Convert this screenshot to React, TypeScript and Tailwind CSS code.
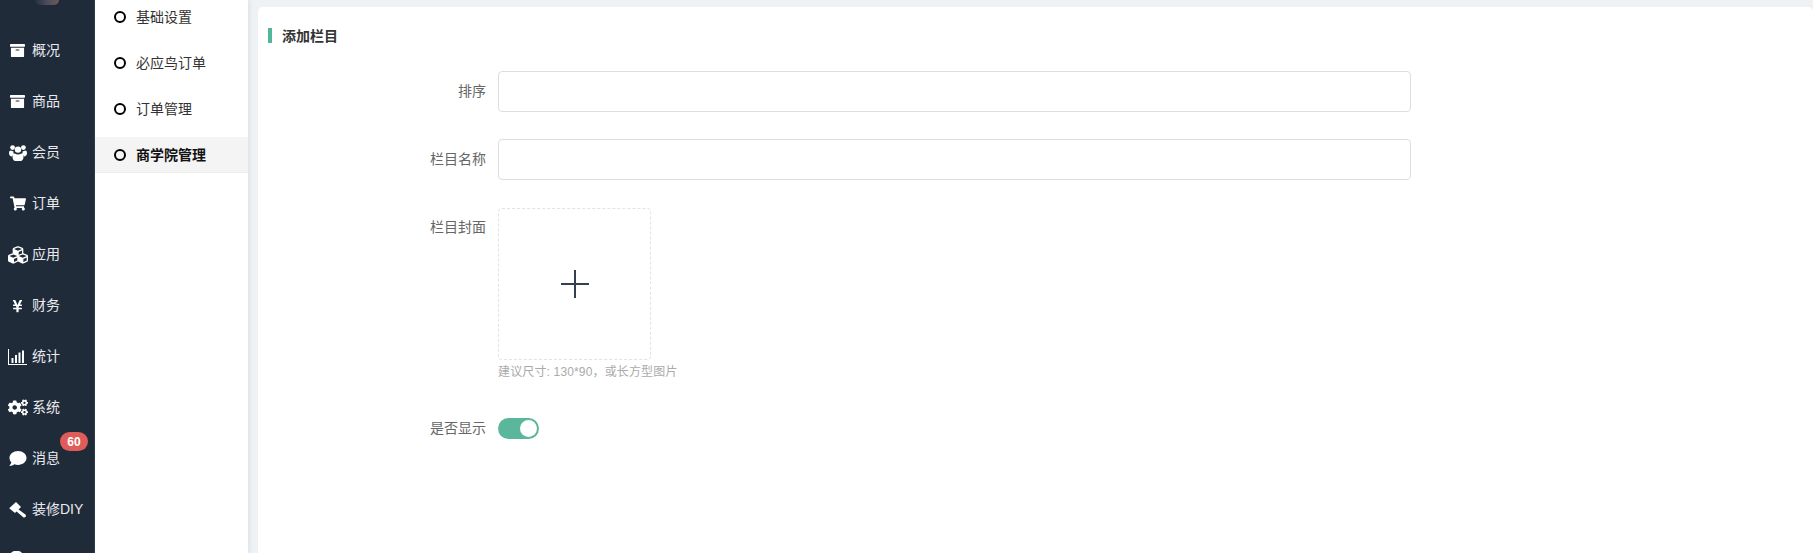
import React from "react";
import { FaArchive, FaShoppingCart, FaCubes, FaYenSign, FaCogs, FaComment } from "react-icons/fa";

const BarChart = ({ className }: { className?: string }) => (
  <svg viewBox="0 0 19 16" className={className} fill="currentColor">
    <path d="M0 0h1v15h18v1H0z" />
    <path d="M3.5 9h2v5h-2zM7 6h2v8H7zM10.5 3.500h2V14h-2zM14 1.500h2V14h-2z" />
  </svg>
);

const Users = ({ className }: { className?: string }) => (
  <svg viewBox="0 0 18 16" className={className} fill="currentColor">
    <circle cx="3.600" cy="2.600" r="2.400" />
    <circle cx="14.400" cy="2.600" r="2.400" />
    <circle cx="9" cy="4.600" r="3.200" />
    <path d="M0 8c0-1.600.9-2.400 1.900-2.400.7.500 1.500.8 2.500.7-.2 1.200.2 2.300 1 3.100-1.200.3-2 1-2.400 2.100C1.200 11.500 0 10.300 0 8zM18 8c0-1.600-.9-2.400-1.900-2.400-.7.500-1.500.8-2.500.7.200 1.200-.2 2.300-1 3.100 1.200.3 2 1 2.400 2.100 1.800-.1 3-1.200 3-3.500z" />
    <path d="M5.800 8.500c.8.700 1.900 1.100 3.200 1.100s2.400-.4 3.200-1.100c1.500.1 2.300 1.400 2.300 3.300 0 2.700-1.200 4.200-2.900 4.200H6.400c-1.700 0-2.900-1.500-2.900-4.200 0-1.900.8-3.200 2.300-3.300z" />
  </svg>
);

const Gavel = ({ className }: { className?: string }) => (
  <svg viewBox="0 0 17 16" className={className} fill="currentColor">
    <path d="M7 0 12 5 6 11 .2 6.200z" />
    <path d="M8.600 6.800 16.400 12.600c.7.600.7 1.800 0 2.500s-1.800.6-2.400-.1L7 9z" />
  </svg>
);

const items: { label: string; icon: React.ReactNode; badge?: string }[] = [
  { label: "概况", icon: <FaArchive className="w-[15px] h-[15px]" /> },
  { label: "商品", icon: <FaArchive className="w-[15px] h-[15px]" /> },
  { label: "会员", icon: <Users className="w-[18px] h-[16px]" /> },
  { label: "订单", icon: <FaShoppingCart className="w-[16px] h-[15px]" /> },
  { label: "应用", icon: <FaCubes className="w-[20px] h-[20px]" /> },
  { label: "财务", icon: <FaYenSign className="w-[11px] h-[14px]" /> },
  { label: "统计", icon: <BarChart className="w-[19px] h-[16px]" /> },
  { label: "系统", icon: <FaCogs className="w-[20px] h-[17px]" /> },
  { label: "消息", icon: <FaComment className="w-[18px] h-[17px]" />, badge: "60" },
  { label: "装修DIY", icon: <Gavel className="w-[17px] h-[16px]" /> },
];

const subItems = ["基础设置", "必应鸟订单", "订单管理", "商学院管理"];
const font = "font-['Liberation_Sans','Noto_Sans_CJK_SC',sans-serif]";

function Field({ label, children, top }: { label: string; children: React.ReactNode; top?: boolean }) {
  return (
    <div className={`flex ${top ? "items-start" : "items-center"}`}>
      <div className={`w-[240px] pr-[12px] text-right text-[14px] text-[#666] ${top ? "pt-[10px] leading-[19px]" : ""}`}>{label}</div>
      {children}
    </div>
  );
}

export default function App() {
  return (
    <div className={`${font} flex h-[553px] w-full overflow-hidden bg-[#eef2f5]`}>
      <aside className="w-[95px] shrink-0 bg-[#202b3a] border-r border-[#2f3c4c] text-[#e8eaed] overflow-hidden">
        <div className="flex h-[25px] justify-center items-start">
          <div className="w-[24px] h-[5px] overflow-hidden rounded-b-[12px] bg-gradient-to-r from-[#28303e] via-[#4b4c60] to-[#6f5a50]" />
        </div>
        {items.map((it) => (
          <div key={it.label} className="relative flex h-[51px] items-center">
            <div className="flex w-[32px] justify-center pl-[3px] text-white">{it.icon}</div>
            <span className="text-[14px] whitespace-nowrap">{it.label}</span>
            {it.badge && (
              <span className="absolute left-[60px] top-[-1px] flex h-[19px] w-[28px] items-center justify-center rounded-full bg-[#e05c5a] text-[12px] font-bold text-white">
                {it.badge}
              </span>
            )}
          </div>
        ))}
        <div className="ml-[10px] mt-[16px] h-[10px] w-[13px] rounded-full bg-white" />
      </aside>

      <nav className="w-[153px] shrink-0 bg-white shadow-[2px_0_4px_rgba(0,0,0,0.06)]">
        <div className="flex flex-col">
          {subItems.map((s, i) => {
            const active = i === 3;
            return (
              <div
                key={s}
                className={`flex items-center gap-[10px] pl-[19px] text-[14px] ${
                  active
                    ? "h-[36px] mt-[5px] pt-[1px] bg-[#f4f4f4] border-b border-[#eeeeee] font-bold text-[#111]"
                    : `${i === 0 ? "h-[34px] mb-[6px]" : "h-[46px]"} text-[#333]`
                }`}
              >
                <span className="h-[12px] w-[12px] rounded-full border-2 border-black" />
                <span>{s}</span>
              </div>
            );
          })}
        </div>
      </nav>

      <main className="ml-[10px] mt-[7px] flex-1 rounded-t-[5px] bg-white">
        <div className="flex h-[58px] items-start pl-[10px] pt-[21px]">
          <span className="h-[15px] w-[4px] bg-[#52b79a]" />
          <span className="ml-[10px] mt-[1px] text-[14px] leading-[15px] font-bold text-[#333]">添加栏目</span>
        </div>
        <div className="flex flex-col">
          <div className="mt-[6px]">
            <Field label="排序">
              <div className="h-[41px] w-[913px] rounded-[4px] border border-[#dcdee2] bg-white" />
            </Field>
          </div>
          <div className="mt-[27px]">
            <Field label="栏目名称">
              <div className="h-[41px] w-[913px] rounded-[4px] border border-[#dcdee2] bg-white" />
            </Field>
          </div>
          <div className="mt-[28px]">
            <Field label="栏目封面" top>
              <div>
                <div className="flex h-[152px] w-[153px] items-center justify-center rounded-[4px] border border-dashed border-[#e2e2ec]">
                  <svg width="28" height="28" viewBox="0 0 28 28" className="text-[#343f50]" fill="currentColor">
                    <path d="M0 13h28v2H0zM13 0h2v28h-2z" />
                  </svg>
                </div>
                <div className="mt-[4px] text-[12px] leading-[16px] tracking-[0.15px] text-[#aaaaaa]">建议尺寸: 130*90，或长方型图片</div>
              </div>
            </Field>
          </div>
          <div className="mt-[38px]">
            <Field label="是否显示">
              <div className="flex h-[21px] w-[41px] items-center justify-end rounded-full bg-[#5bb79b] pr-[2px]">
                <span className="h-[17px] w-[17px] rounded-full bg-white" />
              </div>
            </Field>
          </div>
        </div>
      </main>
    </div>
  );
}
